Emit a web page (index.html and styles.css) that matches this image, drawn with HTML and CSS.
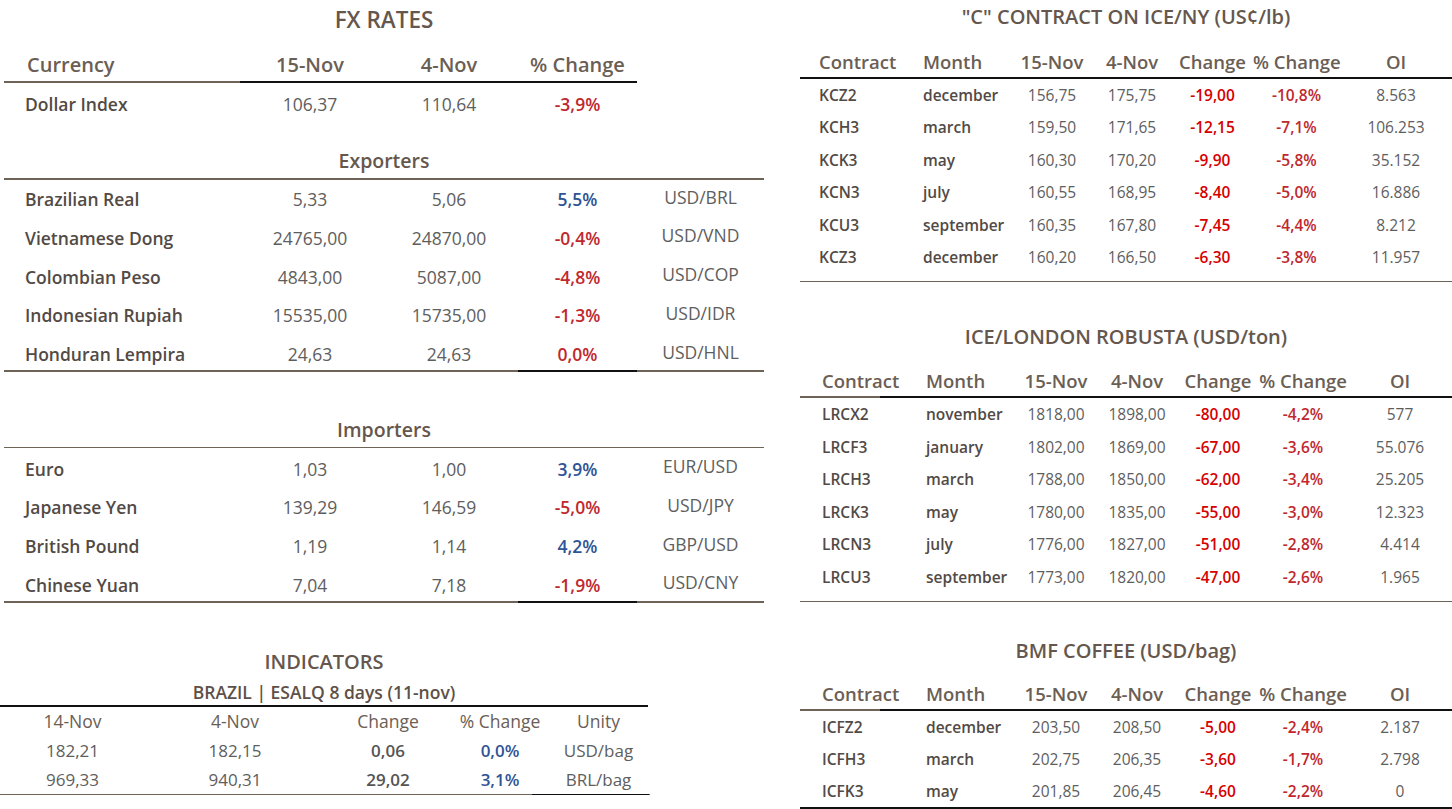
FILE: index.html
```html
<!DOCTYPE html>
<html>
<head>
<meta charset="utf-8">
<link rel="stylesheet" href="styles.css">
</head>
<body>
<div class="page">
  <div class="left">
    <div class="title fx-title">FX RATES</div>
    <div class="fx-row fx-head">
      <div class="lab">Currency</div><div class="c">15-Nov</div><div class="c">4-Nov</div><div class="c">% Change</div><div></div>
    </div>
    <div class="rule fx-rule thick"><span class="br"></span><span class="bk"></span><span class="bk"></span><span class="bk"></span><span class="none"></span></div>
    <div class="fx-row dollar">
      <div class="lab">Dollar Index</div><div class="c v">106,37</div><div class="c v">110,64</div><div class="c red">-3,9%</div><div></div>
    </div>

    <div class="title sub exp-title">Exporters</div>
    <div class="line"></div>
    <div class="fx-body">
      <div class="fx-row"><div class="lab">Brazilian Real</div><div class="c v">5,33</div><div class="c v">5,06</div><div class="c blue">5,5%</div><div class="c v pair">USD/BRL</div></div>
      <div class="fx-row"><div class="lab">Vietnamese Dong</div><div class="c v">24765,00</div><div class="c v">24870,00</div><div class="c red">-0,4%</div><div class="c v pair">USD/VND</div></div>
      <div class="fx-row"><div class="lab">Colombian Peso</div><div class="c v">4843,00</div><div class="c v">5087,00</div><div class="c red">-4,8%</div><div class="c v pair">USD/COP</div></div>
      <div class="fx-row"><div class="lab">Indonesian Rupiah</div><div class="c v">15535,00</div><div class="c v">15735,00</div><div class="c red">-1,3%</div><div class="c v pair">USD/IDR</div></div>
      <div class="fx-row"><div class="lab">Honduran Lempira</div><div class="c v">24,63</div><div class="c v">24,63</div><div class="c red">0,0%</div><div class="c v pair">USD/HNL</div></div>
    </div>
    <div class="rule fx-rule"><span class="br"></span><span class="br"></span><span class="br"></span><span class="bk"></span><span class="br"></span></div>

    <div class="title sub imp-title">Importers</div>
    <div class="line"></div>
    <div class="fx-body imp-body">
      <div class="fx-row"><div class="lab">Euro</div><div class="c v">1,03</div><div class="c v">1,00</div><div class="c blue">3,9%</div><div class="c v pair">EUR/USD</div></div>
      <div class="fx-row"><div class="lab">Japanese Yen</div><div class="c v">139,29</div><div class="c v">146,59</div><div class="c red">-5,0%</div><div class="c v pair">USD/JPY</div></div>
      <div class="fx-row"><div class="lab">British Pound</div><div class="c v">1,19</div><div class="c v">1,14</div><div class="c blue">4,2%</div><div class="c v pair">GBP/USD</div></div>
      <div class="fx-row"><div class="lab">Chinese Yuan</div><div class="c v">7,04</div><div class="c v">7,18</div><div class="c red">-1,9%</div><div class="c v pair">USD/CNY</div></div>
    </div>
    <div class="rule fx-rule thick"><span class="br"></span><span class="br"></span><span class="br"></span><span class="bk"></span><span class="br"></span></div>

    <div class="ind">
      <div class="title ind-title">INDICATORS</div>
      <div class="ind-sub">BRAZIL | ESALQ 8 days (11-nov)</div>
      <div class="rule ind-rule thick"><span class="bk"></span></div>
      <div class="ind-row ind-head"><div>14-Nov</div><div>4-Nov</div><div>Change</div><div>% Change</div><div>Unity</div></div>
      <div class="ind-row"><div>182,21</div><div>182,15</div><div class="bold">0,06</div><div class="blue">0,0%</div><div>USD/bag</div></div>
      <div class="ind-row"><div>969,33</div><div>940,31</div><div class="bold">29,02</div><div class="blue">3,1%</div><div>BRL/bag</div></div>
      <div class="rule ind-rule"><span class="br"></span><span class="br"></span><span class="br"></span><span class="bk"></span><span class="br"></span></div>
    </div>
  </div>

  <div class="right">
    <div class="title kc-title">"C" CONTRACT ON ICE/NY (US¢/lb)</div>
    <div class="ct-row ct-head kc">
      <div class="l1">Contract</div><div class="l2">Month</div><div>15-Nov</div><div>4-Nov</div><div>Change</div><div>% Change</div><div>OI</div>
    </div>
    <div class="line black"></div>
    <div class="ct-body">
      <div class="ct-row kc"><div class="l1 code">KCZ2</div><div class="l2 mon">december</div><div>156,75</div><div>175,75</div><div class="red2">-19,00</div><div class="red">-10,8%</div><div>8.563</div></div>
      <div class="ct-row kc"><div class="l1 code">KCH3</div><div class="l2 mon">march</div><div>159,50</div><div>171,65</div><div class="red2">-12,15</div><div class="red">-7,1%</div><div>106.253</div></div>
      <div class="ct-row kc"><div class="l1 code">KCK3</div><div class="l2 mon">may</div><div>160,30</div><div>170,20</div><div class="red2">-9,90</div><div class="red">-5,8%</div><div>35.152</div></div>
      <div class="ct-row kc"><div class="l1 code">KCN3</div><div class="l2 mon">july</div><div>160,55</div><div>168,95</div><div class="red2">-8,40</div><div class="red">-5,0%</div><div>16.886</div></div>
      <div class="ct-row kc"><div class="l1 code">KCU3</div><div class="l2 mon">september</div><div>160,35</div><div>167,80</div><div class="red2">-7,45</div><div class="red">-4,4%</div><div>8.212</div></div>
      <div class="ct-row kc"><div class="l1 code">KCZ3</div><div class="l2 mon">december</div><div>160,20</div><div>166,50</div><div class="red2">-6,30</div><div class="red">-3,8%</div><div>11.957</div></div>
    </div>
    <div class="line"></div>

    <div class="title rob-title">ICE/LONDON ROBUSTA (USD/ton)</div>
    <div class="ct-row ct-head rob-head">
      <div class="l1">Contract</div><div class="l2">Month</div><div>15-Nov</div><div>4-Nov</div><div>Change</div><div>% Change</div><div>OI</div>
    </div>
    <div class="rule ct-rule"><span class="br"></span><span class="bk"></span></div>
    <div class="ct-body">
      <div class="ct-row"><div class="l1 code">LRCX2</div><div class="l2 mon">november</div><div>1818,00</div><div>1898,00</div><div class="red2">-80,00</div><div class="red">-4,2%</div><div>577</div></div>
      <div class="ct-row"><div class="l1 code">LRCF3</div><div class="l2 mon">january</div><div>1802,00</div><div>1869,00</div><div class="red2">-67,00</div><div class="red">-3,6%</div><div>55.076</div></div>
      <div class="ct-row"><div class="l1 code">LRCH3</div><div class="l2 mon">march</div><div>1788,00</div><div>1850,00</div><div class="red2">-62,00</div><div class="red">-3,4%</div><div>25.205</div></div>
      <div class="ct-row"><div class="l1 code">LRCK3</div><div class="l2 mon">may</div><div>1780,00</div><div>1835,00</div><div class="red2">-55,00</div><div class="red">-3,0%</div><div>12.323</div></div>
      <div class="ct-row"><div class="l1 code">LRCN3</div><div class="l2 mon">july</div><div>1776,00</div><div>1827,00</div><div class="red2">-51,00</div><div class="red">-2,8%</div><div>4.414</div></div>
      <div class="ct-row"><div class="l1 code">LRCU3</div><div class="l2 mon">september</div><div>1773,00</div><div>1820,00</div><div class="red2">-47,00</div><div class="red">-2,6%</div><div>1.965</div></div>
    </div>
    <div class="line"></div>

    <div class="title bmf-title">BMF COFFEE (USD/bag)</div>
    <div class="ct-row ct-head bmf-head">
      <div class="l1">Contract</div><div class="l2">Month</div><div>15-Nov</div><div>4-Nov</div><div>Change</div><div>% Change</div><div>OI</div>
    </div>
    <div class="rule ct-rule thick"><span class="br"></span><span class="bk"></span></div>
    <div class="ct-body bmf-body">
      <div class="ct-row"><div class="l1 code">ICFZ2</div><div class="l2 mon">december</div><div>203,50</div><div>208,50</div><div class="red2">-5,00</div><div class="red">-2,4%</div><div>2.187</div></div>
      <div class="ct-row"><div class="l1 code">ICFH3</div><div class="l2 mon">march</div><div>202,75</div><div>206,35</div><div class="red2">-3,60</div><div class="red">-1,7%</div><div>2.798</div></div>
      <div class="ct-row"><div class="l1 code">ICFK3</div><div class="l2 mon">may</div><div>201,85</div><div>206,45</div><div class="red2">-4,60</div><div class="red">-2,2%</div><div>0</div></div>
    </div>
    <div class="line black thick"></div>
  </div>
</div>
</body>
</html>
```
FILE: styles.css
```css
* { box-sizing: border-box; }
html, body { margin: 0; padding: 0; background: #ffffff; }
body {
  font-family: "Open Sans", "Noto Sans", sans-serif;
  color: #5a5a5a;
  width: 1452px;
  height: 809px;
  overflow: hidden;
}
.page {
  display: flex;
  align-items: flex-start;
}
.left {
  width: 764px;
  margin-left: 0;
}
.right {
  width: 652px;
  margin-left: 36px;
}

.title {
  text-align: center;
  color: #65574d;
  font-weight: 600;
  white-space: nowrap;
}
.fx-title {
  font-size: 22.5px;
  line-height: 40px;
  height: 40px;
  margin-left: 4px;
}
.sub {
  font-size: 19.5px;
  line-height: 34px;
  height: 34px;
  margin-left: 4px;
}
.exp-title { margin-top: 21px; }
.imp-title { margin-top: 41px; }

.fx-row {
  display: grid;
  grid-template-columns: 236px 140px 138px 119px 127px;
  height: 32px;
  align-items: center;
  margin-left: 4px;
  font-size: 17.5px;
}
.fx-head {
  height: 34px;
  margin-top: 7px;
  font-size: 20px;
  font-weight: 600;
  color: #6b5e54;
}
.fx-head .lab { padding-left: 23px; color: #6b5e54; font-weight: 600; }
.dollar { height: 38px; margin-top: 2px; }

.lab {
  padding-left: 21px;
  font-weight: 600;
  color: #524a45;
  white-space: nowrap;
}
.c { text-align: center; white-space: nowrap; }
.v { color: #5e5e5e; font-weight: 400; }
.pair { padding-bottom: 5px; }
.red { color: #c0282e; font-weight: 600; }
.red2 { color: #d60000; font-weight: 600; }
.blue { color: #2f5496; font-weight: 600; }
.bold { font-weight: 600; color: #555; }

.fx-body {
  display: flex;
  flex-direction: column;
  gap: 6.75px;
  padding-top: 3.5px;
}
.imp-body { padding-top: 4.5px; }

.line {
  height: 1.5px;
  background: #6f6358;
  margin-left: 4px;
}
.right .line { margin-left: 0; }
.line.black { background: #111; }
.line.thick { height: 2px; }

.rule {
  display: grid;
  height: 1.5px;
}
.rule.thick { height: 2px; }
.rule .br { background: #6f6358; }
.rule .bk { background: #111; }
.rule .none { background: transparent; }
.fx-rule {
  grid-template-columns: 236px 140px 138px 119px 127px;
  margin-left: 4px;
}

.ind { width: 648px; }
.ind-title {
  margin-top: 44px;
  font-size: 20px;
  line-height: 30px;
  height: 30px;
}
.ind-sub {
  text-align: center;
  font-size: 17.5px;
  font-weight: 600;
  color: #5e5048;
  line-height: 26px;
  height: 26px;
  margin-top: 2px;
}
.ind-rule { grid-template-columns: 530px 1px 1px 117px 1px; }
.ind-rule.thick { grid-template-columns: 648px; }
.ind-row {
  display: grid;
  grid-template-columns: 145px 180px 126px 98px 99px;
  height: 29px;
  align-items: center;
  text-align: center;
  font-size: 17px;
  color: #5e5e5e;
}
.ind-head { color: #6a5e55; font-size: 17.5px; }

.kc-title {
  font-size: 20px;
  line-height: 34px;
  height: 34px;
}
.rob-title {
  margin-top: 38px;
  font-size: 20px;
  line-height: 34px;
  height: 34px;
}
.bmf-title {
  margin-top: 32px;
  font-size: 20px;
  line-height: 34px;
  height: 34px;
}

.ct-row {
  display: grid;
  grid-template-columns: 122px 94px 80px 82px 80px 90px 104px;
  height: 32.5px;
  align-items: center;
  text-align: center;
  font-size: 15.5px;
  color: #5e5e5e;
  white-space: nowrap;
}
.ct-row.kc {
  grid-template-columns: 119px 93px 80px 80px 81px 87px 112px;
}
.ct-head {
  height: 32px;
  margin-top: 12px;
  font-size: 18.5px;
  font-weight: 600;
  color: #6b5e54;
}
.kc.ct-head { height: 31px; }
.rob-head { height: 31px; margin-top: 11px; }
.bmf-head { margin-top: 9px; height: 32px; }
.l1 { text-align: left; padding-left: 22px; }
.kc .l1 { padding-left: 19px; }
.l2 { text-align: left; padding-left: 4px; }
.kc .l2 { padding-left: 4px; }
.code { font-weight: 600; color: #524a45; }
.mon { font-weight: 600; color: #524a45; }
.ct-head .l1, .ct-head .l2 { color: #6b5e54; }

.ct-body { padding-bottom: 7px; }
.rob-head + .rule + .ct-body { padding-top: 0.5px; padding-bottom: 7.5px; }
.bmf-body { padding-bottom: 0; }
.bmf-body .ct-row { height: 32px; }

.ct-rule { grid-template-columns: 80px 572px; }
```
